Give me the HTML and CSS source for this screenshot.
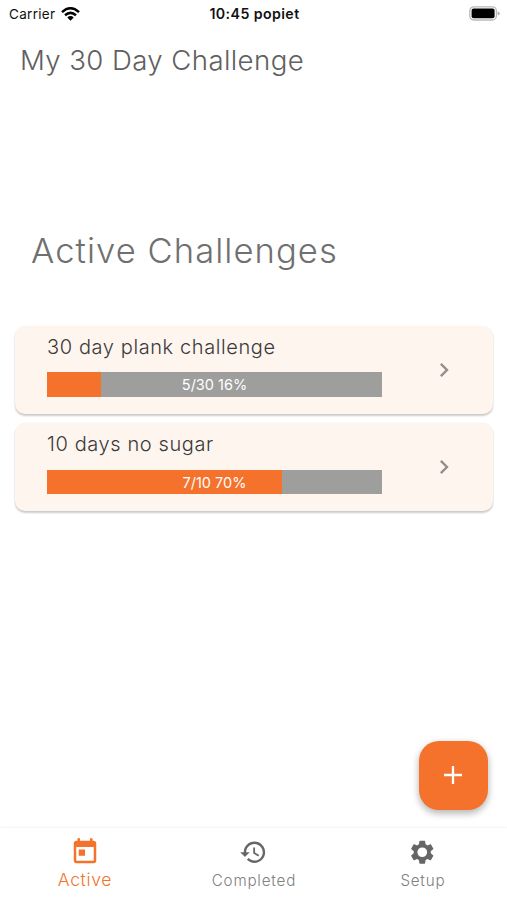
FILE: index.html
```html
<!DOCTYPE html>
<html lang="en">
<head>
<meta charset="utf-8">
<title>My 30 Day Challenge</title>
<link rel="stylesheet" href="styles.css">
</head>
<body>
<div class="app">
  <header class="status">
    <div class="carrier"><span>Carrier</span>
      <svg class="wifi" viewBox="0 0 19 14"><g fill="none" stroke="#000" stroke-width="2.5"><path d="M1 5.1Q9.500-2.500 18 5.100"/><path d="M4 8.300Q9.500 3.500 15 8.300"/></g><path d="M6.300 10.400Q9.500 7.800 12.700 10.400L9.500 13.700z"/></svg>
    </div>
    <div class="clock">10:45 popiet</div>
    <svg class="battery" viewBox="0 0 31 15"><rect x=".8" y=".8" width="26.600" height="13.200" rx="4" fill="#fff" stroke="#b9b9b9" stroke-width="1.300"/><rect x="2.600" y="2.600" width="23" height="9.600" rx="2"/><path d="M28.700 5.200q2 .8 2 2.200t-2 2.200z" fill="#aaa"/></svg>
  </header>
  <h1 class="title">My 30 Day Challenge</h1>
  <main class="content">
    <h2 class="heading">Active Challenges</h2>
    <section class="list">
      <article class="card">
        <div class="info">
          <h3 class="name">30 day plank challenge</h3>
          <div class="bar"><div class="fill" style="width:16.1%"></div><span class="progress">5/30 16%</span></div>
        </div>
        <svg class="chevron" viewBox="0 0 24 24"><path d="M10 6 8.590 7.410 13.170 12l-4.580 4.590L10 18l6-6z"/></svg>
      </article>
      <article class="card">
        <div class="info">
          <h3 class="name">10 days no sugar</h3>
          <div class="bar"><div class="fill" style="width:70%"></div><span class="progress">7/10 70%</span></div>
        </div>
        <svg class="chevron" viewBox="0 0 24 24"><path d="M10 6 8.590 7.410 13.170 12l-4.580 4.590L10 18l6-6z"/></svg>
      </article>
    </section>
  </main>
  <button class="fab" aria-label="Add"><svg viewBox="0 0 18 18"><path d="M9 0v18M0 9h18" stroke="#fff" stroke-width="2.300"/></svg></button>
  <nav class="tabs">
    <a class="tab active">
      <svg viewBox="0 0 24 24"><path d="M19 3h-1V1h-2v2H8V1H6v2H5c-1.110 0-1.990.9-1.990 2L3 19c0 1.100.89 2 2 2h14c1.100 0 2-.9 2-2V5c0-1.100-.9-2-2-2zm0 16H5V8h14v11zM7 10h5v5H7z"/></svg>
      <span>Active</span>
    </a>
    <a class="tab">
      <svg viewBox="0 0 24 24"><path d="M13 3c-4.970 0-9 4.030-9 9H1l3.890 3.890.07.14L9 12H6c0-3.870 3.130-7 7-7s7 3.130 7 7-3.130 7-7 7c-1.930 0-3.680-.79-4.940-2.060l-1.420 1.420C8.270 19.990 10.510 21 13 21c4.970 0 9-4.030 9-9s-4.030-9-9-9zm-1 5v5l4.280 2.540.72-1.210-3.500-2.080V8H12z"/></svg>
      <span>Completed</span>
    </a>
    <a class="tab">
      <svg viewBox="0 0 24 24"><path d="M19.140 12.940c.04-.3.06-.61.06-.94 0-.32-.02-.64-.07-.94l2.030-1.580c.18-.14.23-.41.12-.61l-1.920-3.320c-.12-.22-.37-.29-.59-.22l-2.390.96c-.5-.38-1.030-.7-1.620-.94l-.36-2.540c-.04-.24-.24-.41-.48-.41h-3.840c-.24 0-.43.17-.47.41l-.36 2.540c-.59.24-1.130.57-1.620.94l-2.390-.96c-.22-.08-.47 0-.59.22L2.740 8.870c-.12.21-.08.47.12.61l2.030 1.580c-.05.3-.09.63-.09.94s.02.64.07.94l-2.030 1.580c-.18.14-.23.41-.12.61l1.920 3.320c.12.22.37.29.59.22l2.390-.96c.5.38 1.030.7 1.620.94l.36 2.540c.05.24.24.41.48.41h3.840c.24 0 .44-.17.47-.41l.36-2.540c.59-.24 1.130-.56 1.620-.94l2.390.96c.22.08.47 0 .59-.22l1.920-3.320c.12-.22.07-.47-.12-.61l-2.010-1.580zM12 16.100A4.100 4.100 0 1 1 12 7.900a4.100 4.100 0 0 1 0 8.200z"/></svg>
      <span>Setup</span>
    </a>
  </nav>
</div>
</body>
</html>
```
FILE: styles.css
```css
* { box-sizing: border-box; }
body { margin: 0; background: #fff; font-family: Inter, "Liberation Sans", sans-serif; }
h1, h2, h3 { margin: 0; font-weight: 300; white-space: nowrap; }
svg { display: block; flex: none; }
.app { position: relative; height: 900px; display: flex; flex-direction: column; overflow: hidden; }
.status { display: grid; grid-template-columns: 1fr auto 1fr; align-items: center; height: 27px; padding: 0 7px 0 9px; color: #111; font-size: 13.5px; }
.carrier { display: flex; align-items: center; gap: 6px; }
.carrier span { letter-spacing: .3px; }
.wifi { width: 19px; height: 14px; }
.clock { font-weight: 600; font-size: 14.2px; letter-spacing: .4px; }
.battery { width: 31px; height: 15px; justify-self: end; }
.title { height: 66px; padding-left: 20px; line-height: 67px; font-size: 27.6px; letter-spacing: .4px; color: #606060; }
.content { flex: 1; padding: 132px 14px 0 15px; }
.heading { height: 50px; padding-left: 16px; line-height: 51px; font-size: 34.6px; letter-spacing: 1.05px; color: #707070; }
.list { display: flex; flex-direction: column; gap: 9.700px; margin-top: 50.700px; }
.card { display: flex; align-items: center; height: 88px; padding-left: 32px; padding-right: 35.5px; justify-content: space-between; background: #fef5ef; border-radius: 10px; box-shadow: 0 2px 2px rgba(0,0,0,.2), 0 0 2px rgba(0,0,0,.05); }
.info { width: 335px; height: 100%; padding-top: 6px; }
.name { height: 28px; line-height: 30px; font-size: 20px; font-weight: 350; letter-spacing: .6px; color: #3a3a3a; }
.bar { position: relative; display: flex; align-items: center; justify-content: center; height: 24.500px; margin-top: 12.500px; background: #9e9e9d; }
.fill { position: absolute; inset: 0 auto 0 0; background: #f4722b; }
.progress { position: relative; top: .5px; font-size: 14.500px; font-weight: 400; color: #fff; }
.chevron { width: 28px; height: 28px; fill: #958d89; }
.fab { position: absolute; right: 19.5px; bottom: 90.5px; width: 69px; height: 69px; display: grid; place-items: center; padding: 0; border: 0; border-radius: 20px; background: #f4722b; box-shadow: 0 4px 7px rgba(0,0,0,.22), 0 1px 8px rgba(0,0,0,.1); }
.fab svg { width: 18px; height: 18px; }
.tabs { display: grid; grid-template-columns: repeat(3, 1fr); height: 72px; background: #fff; box-shadow: 0 -1px 2px rgba(0,0,0,.05); }
.tab { display: flex; flex-direction: column; align-items: center; padding-top: 10px; color: #808080; font-size: 15.2px; font-weight: 350; letter-spacing: .8px; }
.tab svg { width: 28.500px; height: 28.500px; fill: #666; }
.tab span { line-height: 20px; margin: 4.500px -.8px 0 0; }
.tab.active { color: #f4722b; font-size: 17.6px; letter-spacing: .6px; padding-top: 9px; }
.tab.active svg { width: 30px; height: 30px; fill: #f4722b; }
.tab.active span { margin-top: 2.5px; }
```
